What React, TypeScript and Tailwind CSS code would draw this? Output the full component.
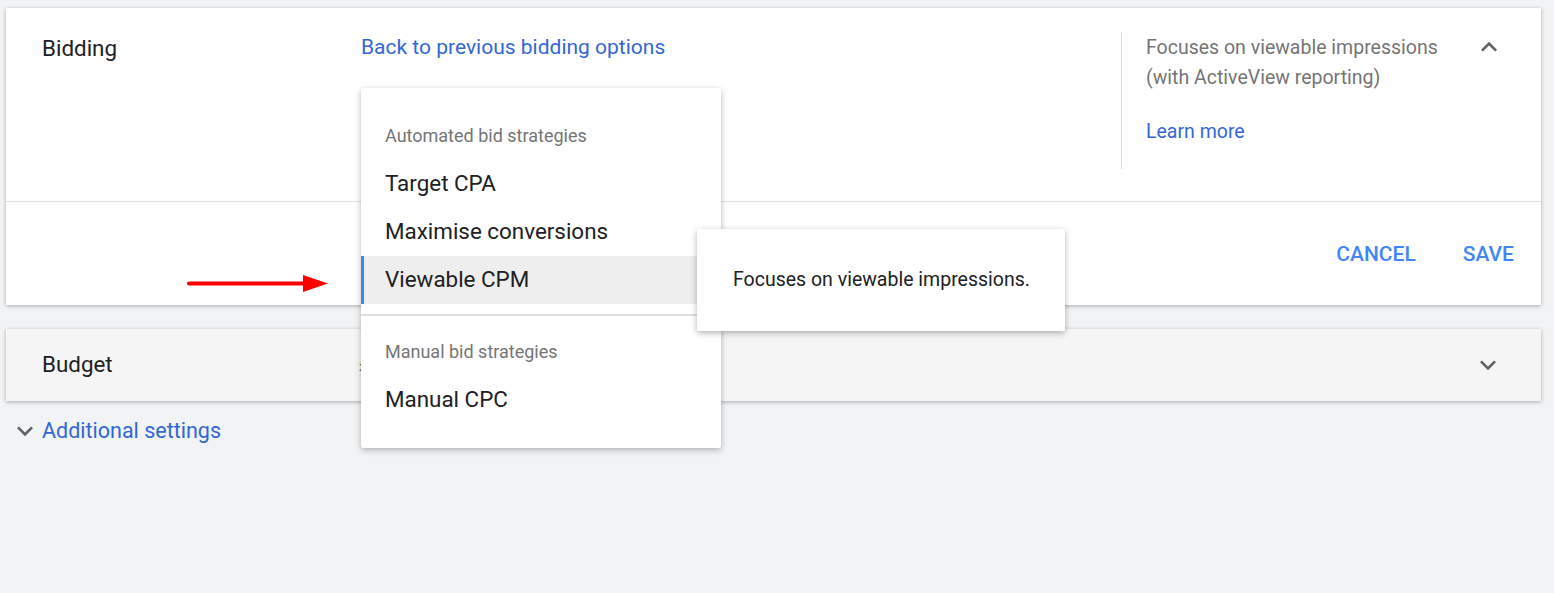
import React from 'react';

const font = { fontFamily: 'Roboto, "Noto Sans", Arial, sans-serif' };

function Chevron({ up = false }: { up?: boolean }) {
  return (
    <svg width="32" height="32" viewBox="0 0 24 24" className="text-[#5f6368]">
      <path
        d={up ? 'M7.41 15.41 12 10.83l4.59 4.58L18 14l-6-6-6 6z' : 'M7.41 8.59 12 13.17l4.59-4.58L18 10l-6 6-6-6z'}
        fill="currentColor"
      />
    </svg>
  );
}

function BidMenu() {
  return (
    <div className="absolute left-[355px] top-[80px] w-[360px] bg-white rounded-[2px] shadow-[0_2px_6px_rgba(0,0,0,0.28)] py-[24px] z-10">
      <div className="px-[24px] h-[48px] flex items-center text-[18px] text-[#757575] -mt-[1px] mb-[1px]">Automated bid strategies</div>
      <div className="px-[24px] h-[48px] flex items-center text-[22.4px] text-[#202124]">Target CPA</div>
      <div className="px-[24px] h-[48px] flex items-center text-[22.4px] text-[#202124]">Maximise conversions</div>
      <div className="px-[21px] h-[48px] flex items-center text-[22.4px] text-[#202124] bg-[#eeeeee] border-l-[3px] border-[#4285f4]">
        Viewable CPM
      </div>
      <div className="border-t-2 border-[#e0e0e0] mt-[10px] mb-[12px]" />
      <div className="px-[24px] h-[48px] flex items-center text-[18px] text-[#757575] -mt-[1px] mb-[1px]">Manual bid strategies</div>
      <div className="px-[24px] h-[48px] flex items-center text-[22.4px] text-[#202124]">Manual CPC</div>
    </div>
  );
}

export default function App() {
  return (
    <main className="min-h-screen bg-[#f1f3f4] pt-[8px] px-[6px] pr-[13px]" style={font}>
      <section className="relative bg-white shadow-[0_1px_4px_rgba(0,0,0,0.3)]">
        <div className="grid grid-cols-[355px_760px_1fr] h-[194px] border-b border-[#e0e0e0]">
          <div className="pl-[36px] pt-[24px] text-[22.4px] text-[#202124]">Bidding</div>
          <div className="pt-[24px]">
            <a className="text-[21px] text-[#3367d6]">Back to previous bidding options</a>
          </div>
          <div className="mt-[24px] mb-[32px] border-l border-[#dadce0] pl-[24px] pr-[36px] flex justify-between">
            <div className="text-[19.5px] text-[#757575] leading-[30px] pt-[1px]">
              <p>Focuses on viewable impressions</p>
              <p>(with ActiveView reporting)</p>
              <a className="block mt-[24px] text-[#3367d6]">Learn more</a>
            </div>
            <div className="-mt-[1px]">
              <Chevron up />
            </div>
          </div>
        </div>
        <div className="h-[103px] flex items-center justify-end gap-[47px] pr-[27px] pt-[2px]">
          <button className="text-[21px] font-medium text-[#4285f4]">CANCEL</button>
          <button className="text-[21px] font-medium text-[#4285f4]">SAVE</button>
        </div>

        <svg className="absolute left-[180px] top-[266px]" width="144" height="18" viewBox="0 0 144 18">
          <line x1="3" y1="9.5" x2="120" y2="9.5" stroke="#ff0000" strokeWidth="4" strokeLinecap="round" />
          <polygon points="117,1 142,9.5 117,18" fill="#ff0000" />
        </svg>

        <BidMenu />

        <div className="absolute left-[691px] top-[221px] w-[368px] h-[102px] bg-white rounded-[2px] shadow-[0_2px_6px_rgba(0,0,0,0.3)] flex items-center pl-[36px] text-[19.5px] text-[#202124] z-20">
          Focuses on viewable impressions.
        </div>
      </section>

      <section className="mt-[24px] h-[72px] bg-[#f5f5f5] shadow-[0_1px_4px_rgba(0,0,0,0.3)] flex items-center justify-between pl-[36px] pr-[37px]">
        <div className="flex items-center">
          <span className="text-[22.4px] text-[#202124] w-[317px]">Budget</span>
          <span className="text-[18px] text-[#5f6368]">£</span>
        </div>
        <Chevron />
      </section>

      <div className="flex items-center mt-[14px] pl-[3px] gap-[1px]">
        <Chevron />
        <a className="text-[21.5px] text-[#3367d6]">Additional settings</a>
      </div>
    </main>
  );
}
